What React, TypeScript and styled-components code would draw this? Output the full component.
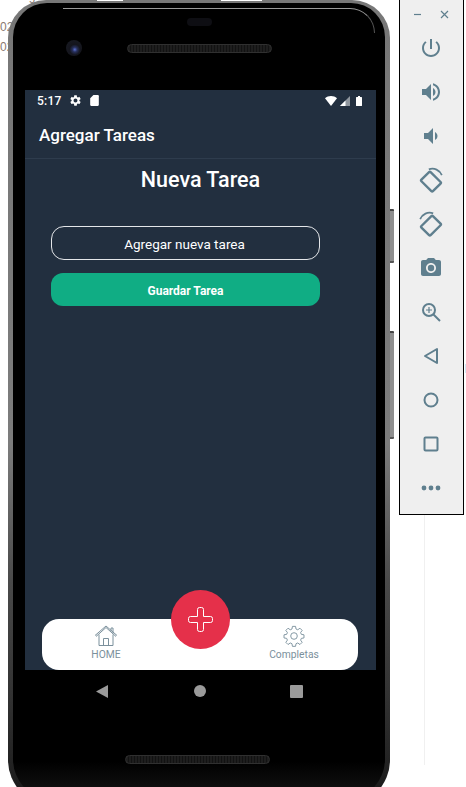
import React from 'react';
import styled, { createGlobalStyle } from 'styled-components';

const GlobalStyle = createGlobalStyle`
  html, body {
    margin: 0;
    padding: 0;
    background: #fff;
    font-family: Roboto, "Liberation Sans", sans-serif;
  }
`;

const Page = styled.div`
  position: relative;
  display: flex;
  align-items: flex-start;
  width: 466px;
  height: 787px;
  overflow: hidden;
  background: #fff;
`;

// bits of the desktop window that peek out behind the emulator
const BehindText = styled.span<{ $left: number; $top: number }>`
  position: absolute;
  left: ${(p) => p.$left}px;
  top: ${(p) => p.$top}px;
  font: 12px "Liberation Sans", sans-serif;
  color: #8a7a70;
  white-space: nowrap;
`;

const WindowLine = styled.div`
  position: absolute;
  left: 424px;
  top: 515px;
  width: 1px;
  height: 250px;
  background: #f0f0f0;
`;

const BlueMark = styled.div`
  position: absolute;
  left: 465px;
  top: 364px;
  width: 1px;
  height: 9px;
  background: #cfe8f5;
`;

const TopPatch = styled.div<{ $left: number; $width: number }>`
  position: absolute;
  z-index: 2;
  left: ${(p) => p.$left}px;
  top: 0;
  width: ${(p) => p.$width}px;
  height: 1px;
  background: #fff;
`;

const Frame = styled.div`
  position: relative;
  flex: none;
  box-sizing: border-box;
  width: 382px;
  height: 806px;
  margin: 0 0 0 8px;
  padding: 3px 5px 5px;
  border-radius: 38px 38px 46px 46px;
  background: linear-gradient(#777 0, #7c7c7c 55%, #4a4a4a 72%, #333 86%, #222 95%, #151515 100%);
`;

const SideButton = styled.div<{ $top: number; $height: number }>`
  position: absolute;
  right: -4px;
  top: ${(p) => p.$top}px;
  width: 4px;
  height: ${(p) => p.$height}px;
  background: #8f8f8f;
  border-radius: 0 1px 1px 0;
  border-top: 2px solid #444;
  border-bottom: 2px solid #555;
  box-sizing: border-box;
`;

const Bezel = styled.div`
  position: relative;
  display: flex;
  flex-direction: column;
  height: 100%;
  border-radius: 34px 34px 42px 42px;
  background: linear-gradient(#000 95%, #161616 100%);

  &::before {
    content: '';
    position: absolute;
    left: 50px;
    right: 10px;
    top: 5px;
    height: 24px;
    border-top: 1px solid #9a9a9a;
    border-right: 1px solid #555;
    border-radius: 0 26px 0 0;
  }
`;

const TopBezel = styled.div`
  box-sizing: border-box;
  height: 87px;
  padding-top: 15px;
`;

const Sensor = styled.div`
  width: 25px;
  height: 8px;
  margin-left: 174px;
  border-radius: 4px;
  background: #0e0e13;
`;

const CameraRow = styled.div`
  display: flex;
  align-items: center;
  margin-top: 14px;
  padding-left: 53px;
`;

const Lens = styled.div`
  width: 16px;
  height: 16px;
  border-radius: 50%;
  background: radial-gradient(circle at 55% 60%, #5a6fd0 0, #27305c 18%, #14151d 40%, #1a1c24 100%);
`;

const Speaker = styled.div<{ $left: number }>`
  box-sizing: border-box;
  width: 145px;
  height: 9px;
  margin-left: ${(p) => p.$left}px;
  border: 1px solid #303030;
  border-radius: 5px;
  background: repeating-linear-gradient(90deg, #1e1e1e 0 2px, #121212 2px 3px);
`;

const Screen = styled.div`
  position: relative;
  display: flex;
  flex-direction: column;
  width: 351px;
  height: 580px;
  margin-left: 12px;
  background: #222f3f;
  color: #fff;
`;

const StatusBar = styled.div`
  display: flex;
  align-items: center;
  height: 21px;
  padding: 0 14px 0 12px;
  font-size: 12px;
  font-weight: 500;
`;

const StatusTime = styled.span`
  width: 32px;
  letter-spacing: 0.2px;
`;

const StatusGroup = styled.div`
  display: flex;
  align-items: center;
  gap: 3px;
  margin-left: auto;
`;

const StatusIcon = styled.svg<{ $gap?: number }>`
  display: block;
  margin-right: ${(p) => p.$gap ?? 0}px;
  fill: #fff;
`;

const Header = styled.div`
  display: flex;
  align-items: center;
  box-sizing: border-box;
  height: 48px;
  padding: 0 14px;
  border-bottom: 1px solid #2e3c4d;
  font-size: 17px;
  font-weight: 500;
`;

const Content = styled.div`
  flex: 1;
  display: flex;
  flex-direction: column;
`;

const Title = styled.h1`
  margin: 8px 0 0;
  font-size: 21.5px;
  line-height: 26px;
  font-weight: 500;
  text-align: center;
`;

const Form = styled.div`
  display: flex;
  flex-direction: column;
  gap: 13px;
  width: 269px;
  margin: 33px 0 0 26px;
`;

const TaskInput = styled.input`
  box-sizing: border-box;
  width: 100%;
  height: 34px;
  padding: 2px 2px 0 0;
  border: 1px solid #e4e6e9;
  border-radius: 13px;
  background: transparent;
  font: 400 13.5px Roboto, sans-serif;
  color: #fff;
  text-align: center;
  outline: none;

  &::placeholder {
    color: #fff;
    opacity: 1;
  }
`;

const SaveButton = styled.button`
  width: 100%;
  height: 33px;
  padding: 2px 0 0;
  border: none;
  border-radius: 12px;
  background: #10ad84;
  color: #fff;
  font: 700 12px Roboto, sans-serif;
`;

const TabBar = styled.div`
  position: relative;
  display: flex;
  justify-content: space-between;
  box-sizing: border-box;
  width: 316px;
  height: 51px;
  margin-left: 17px;
  padding: 0 32px;
  border-radius: 17px;
  background: #fff;
`;

const Tab = styled.div`
  display: flex;
  flex-direction: column;
  align-items: center;
  width: 64px;
  padding-top: 6px;
  color: #7b909c;
  font-size: 10.3px;
  line-height: 14px;
`;

const TabIcon = styled.svg`
  display: block;
  width: 24px;
  height: 22px;
  margin-bottom: 1px;
  fill: none;
  stroke: #7b909c;
  stroke-width: 1;
`;

const Fab = styled.div`
  position: absolute;
  left: 129px;
  top: -29px;
  display: flex;
  align-items: center;
  justify-content: center;
  width: 59px;
  height: 59px;
  border-radius: 50%;
  background: #e5304a;
`;

const NavBar = styled.div`
  display: flex;
  align-items: center;
  justify-content: space-between;
  height: 42px;
  width: 351px;
  box-sizing: border-box;
  margin-left: 12px;
  padding: 0 73px 0 71px;
`;

const NavSquare = styled.div`
  width: 13px;
  height: 13px;
  border-radius: 1px;
  background: #9a9a9a;
`;

const NavCircle = styled.div`
  width: 12px;
  height: 12px;
  margin-left: 2px;
  border-radius: 50%;
  background: #9a9a9a;
`;

const BottomSpeaker = styled.div`
  margin: 43px 0 0 112px;
`;

const Rail = styled.div`
  flex: none;
  box-sizing: border-box;
  display: flex;
  flex-direction: column;
  align-items: center;
  width: 65px;
  height: 516px;
  margin: -1px 0 0 9px;
  padding-right: 1px;
  border: 1px solid #000;
  background: #efefef;
`;

const WindowControls = styled.div`
  display: flex;
  align-items: center;
  justify-content: space-between;
  width: 36px;
  height: 23px;
  padding-top: 3px;
`;

const RailButton = styled.div`
  display: flex;
  align-items: center;
  justify-content: center;
  width: 44px;
  height: 44px;
  flex: none;
`;

const RailIcon = styled.svg`
  display: block;
  width: 24px;
  height: 24px;
  fill: #5f7f8e;
`;

const StrokeIcon = styled.svg`
  display: block;
  fill: none;
  stroke: #5f7f8e;
  stroke-width: 2;
`;

const gearPath =
  'M19.14 12.94c.04-.3.06-.61.06-.94 0-.32-.02-.64-.07-.94l2.03-1.58c.18-.14.23-.41.12-.61l-1.92-3.32c-.12-.22-.37-.29-.59-.22l-2.39.96c-.5-.38-1.03-.7-1.62-.94l-.36-2.54c-.04-.24-.24-.41-.48-.41h-3.84c-.24 0-.43.17-.47.41l-.36 2.54c-.59.24-1.13.57-1.62.94l-2.39-.96c-.22-.08-.47 0-.59.22L2.74 8.87c-.12.21-.08.47.12.61l2.03 1.58c-.05.3-.09.63-.09.94s.02.64.07.94l-2.03 1.58c-.18.14-.23.41-.12.61l1.92 3.32c.12.22.37.29.59.22l2.39-.96c.5.38 1.03.7 1.62.94l.36 2.54c.05.24.24.41.48.41h3.84c.24 0 .44-.17.47-.41l.36-2.54c.59-.24 1.13-.56 1.62-.94l2.39.96c.22.08.47 0 .59-.22l1.92-3.32c.12-.22.07-.47-.12-.61l-2.01-1.58zM12 15.6c-1.98 0-3.6-1.62-3.6-3.6s1.62-3.6 3.6-3.6 3.6 1.62 3.6 3.6-1.62 3.6-3.6 3.6z';

const RotateIcon = ({ mirror }: { mirror?: boolean }) => (
  <StrokeIcon width="26" height="26" viewBox="0 0 24 24">
    <g transform={mirror ? 'translate(24 0) scale(-1 1)' : undefined}>
      <rect x="6" y="6" width="12" height="15" rx="1" transform="rotate(-45 12 13.500)" strokeWidth="2.200" />
      <path d="M10 2.200C15 .2 20 3 22 7.500" strokeWidth="1.600" />
    </g>
  </StrokeIcon>
);

const App = () => {
  return (
    <Page>
      <GlobalStyle />
      <BehindText $left={2} $top={-11}>e moglia</BehindText>
      <BehindText $left={-6.7} $top={20}>202</BehindText>
      <BehindText $left={-6.7} $top={40}>202</BehindText>
      <WindowLine />
      <BlueMark />
      <TopPatch $left={97} $width={26} />
      <TopPatch $left={221} $width={41} />

      <Frame>
        <SideButton $top={209} $height={54} />
        <SideButton $top={331} $height={108} />
        <Bezel>
          <TopBezel>
            <Sensor />
            <CameraRow>
              <Lens />
              <Speaker $left={45} />
            </CameraRow>
          </TopBezel>

          <Screen>
            <StatusBar>
              <StatusTime>5:17</StatusTime>
              <StatusIcon width="13" height="13" viewBox="0 0 24 24" $gap={6}>
                <path d={gearPath} />
              </StatusIcon>
              <StatusIcon width="13" height="13" viewBox="0 0 24 24">
                <path d="M18 2h-8L4.020 8 4 20c0 1.100.9 2 2 2h12c1.100 0 2-.9 2-2V4c0-1.100-.9-2-2-2z" />
              </StatusIcon>
              <StatusGroup>
                <StatusIcon width="12" height="10" viewBox="0 0 12 10">
                  <path d="M0 2.200C1.600.8 3.700 0 6 0s4.400.8 6 2.200L6 10z" />
                </StatusIcon>
                <StatusIcon width="10" height="10" viewBox="0 0 10 10" $gap={3}>
                  <path d="M10 0v10H0z" fill="#8f969e" />
                  <path d="M5.500 4.500V10H0z" />
                </StatusIcon>
                <StatusIcon width="6" height="10" viewBox="0 0 6 10">
                  <path d="M2 0h2v1h1.400c.3 0 .6.3.6.6v7.800c0 .3-.3.6-.6.6H.6c-.3 0-.6-.3-.6-.6V1.600c0-.3.3-.6.6-.6H2z" />
                </StatusIcon>
              </StatusGroup>
            </StatusBar>

            <Header>Agregar Tareas</Header>

            <Content>
              <Title>Nueva Tarea</Title>
              <Form>
                <TaskInput placeholder="Agregar nueva tarea" readOnly />
                <SaveButton>Guardar Tarea</SaveButton>
              </Form>
            </Content>

            <TabBar>
              <Tab>
                <TabIcon viewBox="0 0 24 22">
                  <path d="M2 11.500 12 2.500l10 9M5 9.500V20.500h14V9.500M9.500 20.500v-7h5v7M17 6.500V3h2v5.500" />
                  <path d="M1 10.500 12 1l11 9.500" />
                </TabIcon>
                HOME
              </Tab>
              <Fab>
                <svg width="27" height="28" viewBox="0 0 27 28" fill="none" stroke="#fff" strokeWidth="1">
                  <path d="M10.500 3.500a2 2 0 0 1 2-2h2a2 2 0 0 1 2 2v7h7a2 2 0 0 1 2 2v2a2 2 0 0 1-2 2h-7v7a2 2 0 0 1-2 2h-2a2 2 0 0 1-2-2v-7h-7a2 2 0 0 1-2-2v-2a2 2 0 0 1 2-2h7z" />
                </svg>
              </Fab>
              <Tab>
                <TabIcon viewBox="0 0 24 24">
                  <circle cx="12" cy="12" r="3.600" />
                  <path d="M10.300 1.500h3.400l.5 2.900 1.900.8 2.400-1.700 2.400 2.400-1.700 2.400.8 1.900 2.900.5v3.400l-2.900.5-.8 1.900 1.700 2.400-2.400 2.400-2.400-1.700-1.900.8-.5 2.900h-3.400l-.5-2.900-1.900-.8-2.400 1.700-2.400-2.400 1.700-2.400-.8-1.900-2.900-.5v-3.400l2.900-.5.8-1.900-1.700-2.400 2.400-2.400 2.400 1.700 1.900-.8z" />
                </TabIcon>
                Completas
              </Tab>
            </TabBar>
          </Screen>

          <NavBar>
            <svg width="12" height="13" viewBox="0 0 12 13" fill="#9a9a9a">
              <path d="M12 0v13L0 6.500z" />
            </svg>
            <NavCircle />
            <NavSquare />
          </NavBar>

          <BottomSpeaker>
            <Speaker $left={0} />
          </BottomSpeaker>
        </Bezel>
      </Frame>

      <Rail>
        <WindowControls>
          <StrokeIcon width="9" height="9" viewBox="0 0 9 9">
            <path d="M1 4.500h7" strokeWidth="1.200" />
          </StrokeIcon>
          <StrokeIcon width="9" height="9" viewBox="0 0 9 9">
            <path d="M1 1l7 7M8 1L1 8" strokeWidth="1.200" />
          </StrokeIcon>
        </WindowControls>
        <RailButton>
          <RailIcon viewBox="0 0 24 24">
            <path d="M13 3h-2v10h2V3zm4.830 2.170l-1.420 1.420C17.990 7.860 19 9.810 19 12c0 3.870-3.130 7-7 7s-7-3.130-7-7c0-2.190 1.010-4.140 2.580-5.420L6.170 5.170C4.230 6.820 3 9.260 3 12c0 4.970 4.030 9 9 9s9-4.030 9-9c0-2.740-1.230-5.180-3.170-6.830z" />
          </RailIcon>
        </RailButton>
        <RailButton>
          <RailIcon viewBox="0 0 24 24">
            <path d="M3 9v6h4l5 5V4L7 9H3zm13.500 3c0-1.770-1.020-3.290-2.500-4.030v8.050c1.480-.73 2.500-2.250 2.500-4.020zM14 3.230v2.060c2.890.86 5 3.540 5 6.710s-2.110 5.850-5 6.710v2.060c4.010-.91 7-4.490 7-8.770s-2.990-7.860-7-8.770z" />
          </RailIcon>
        </RailButton>
        <RailButton>
          <RailIcon viewBox="0 0 24 24">
            <path d="M18.500 12c0-1.770-1.020-3.290-2.500-4.030v8.050c1.480-.73 2.500-2.250 2.500-4.020zM5 9v6h4l5 5V4L9 9H5z" />
          </RailIcon>
        </RailButton>
        <RailButton>
          <RotateIcon />
        </RailButton>
        <RailButton>
          <RotateIcon mirror />
        </RailButton>
        <RailButton>
          <RailIcon viewBox="0 0 24 24">
            <circle cx="12" cy="12" r="3.200" />
            <path d="M9 2L7.170 4H4c-1.100 0-2 .9-2 2v12c0 1.100.9 2 2 2h16c1.100 0 2-.9 2-2V6c0-1.100-.9-2-2-2h-3.170L15 2H9zm3 15c-2.760 0-5-2.240-5-5s2.240-5 5-5 5 2.240 5 5-2.240 5-5 5z" />
          </RailIcon>
        </RailButton>
        <RailButton>
          <StrokeIcon width="20" height="20" viewBox="0 0 20 20">
            <circle cx="8" cy="8" r="6" />
            <path d="M12.500 12.500L19 19" />
            <path d="M8 5v6M5 8h6" strokeWidth="1.200" />
          </StrokeIcon>
        </RailButton>
        <RailButton>
          <StrokeIcon width="16" height="18" viewBox="0 0 16 18">
            <path d="M14 2v14L2 9z" strokeLinejoin="round" />
          </StrokeIcon>
        </RailButton>
        <RailButton>
          <StrokeIcon width="16" height="16" viewBox="0 0 16 16">
            <circle cx="8" cy="8" r="6.500" />
          </StrokeIcon>
        </RailButton>
        <RailButton>
          <StrokeIcon width="16" height="16" viewBox="0 0 16 16">
            <rect x="1.500" y="1.500" width="13" height="13" rx="1" />
          </StrokeIcon>
        </RailButton>
        <RailButton>
          <RailIcon viewBox="0 0 24 24">
            <circle cx="5" cy="12" r="2.400" />
            <circle cx="12" cy="12" r="2.400" />
            <circle cx="19" cy="12" r="2.400" />
          </RailIcon>
        </RailButton>
      </Rail>
    </Page>
  );
};

export default App;
